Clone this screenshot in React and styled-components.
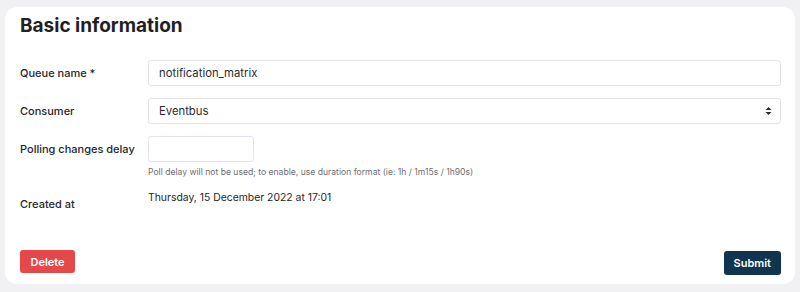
import styled, { createGlobalStyle } from "styled-components";

const GlobalStyle = createGlobalStyle`
  body {
    margin: 0;
    background: #f1f1f4;
    font-family: "Inter", "Noto Sans", sans-serif;
    color: #26262b;
  }
`;

const Page = styled.div`
  padding: 7px 5px 8px;
  height: 292px;
  box-sizing: border-box;
`;

const Card = styled.form`
  background: #fff;
  border-radius: 12px;
  height: 100%;
  box-sizing: border-box;
  padding: 9px 14px 9px 15px;
  display: flex;
  flex-direction: column;
`;

const Title = styled.h2`
  margin: 0;
  font-size: 19px;
  font-weight: 700;
  line-height: 20px;
  color: #1f1f24;
`;

const Fields = styled.div`
  margin-top: 24px;
  display: flex;
  flex-direction: column;
  gap: 12px;
`;

const Row = styled.div`
  display: grid;
  grid-template-columns: 128px 1fr;
  align-items: start;
`;

const Label = styled.label`
  font-size: 11px;
  font-weight: 500;
  line-height: 26px;
  padding-top: ${(p) => p.$offset || 0}px;
  color: #26262b;
`;

const Field = styled.div`
  position: relative;
  display: flex;
  flex-direction: column;
`;

const Input = styled.input`
  box-sizing: border-box;
  height: 26px;
  width: ${(p) => p.$width || "100%"};
  border: 1px solid #e3e5ee;
  border-radius: 3px;
  padding: 0 10px;
  font-family: inherit;
  font-size: 11.3px;
  color: #2a2a30;
  background: #fff;
  outline: none;
`;

const Select = styled.select`
  box-sizing: border-box;
  height: 26px;
  width: 100%;
  border: 1px solid #e3e5ee;
  border-radius: 3px;
  padding: 0 10px;
  font-family: inherit;
  font-size: 11.3px;
  color: #2a2a30;
  background: #fff;
  appearance: none;
  outline: none;
`;

const Caret = styled.svg`
  position: absolute;
  right: 9px;
  top: 8px;
  pointer-events: none;
`;

const Help = styled.div`
  margin-top: 4px;
  font-size: 8.6px;
  line-height: 12px;
  color: #6d6d74;
`;

const Value = styled.div`
  font-size: 10.4px;
  line-height: 16px;
  color: #26262b;
`;

const Footer = styled.div`
  margin-top: auto;
  display: flex;
  justify-content: space-between;
  align-items: flex-end;
`;

const Button = styled.button`
  border: none;
  border-radius: 3px;
  font-family: inherit;
  font-size: 11px;
  font-weight: 600;
  color: #fff;
  background: ${(p) => (p.$danger ? "#e5484a" : "#11344f")};
  height: ${(p) => (p.$danger ? 23 : 24)}px;
  padding: 0 ${(p) => (p.$danger ? 10.5 : 10)}px;
  margin-bottom: ${(p) => (p.$danger ? 2 : 0)}px;
  cursor: pointer;
`;

export default function App() {
  return (
    <Page>
      <GlobalStyle />
      <Card onSubmit={(e) => e.preventDefault()}>
        <Title>Basic information</Title>
        <Fields>
          <Row>
            <Label>Queue name *</Label>
            <Field>
              <Input defaultValue="notification_matrix" />
            </Field>
          </Row>
          <Row>
            <Label>Consumer</Label>
            <Field>
              <Select defaultValue="eventbus">
                <option value="eventbus">Eventbus</option>
              </Select>
              <Caret width="7" height="10" viewBox="0 0 7 10">
                <path d="M0.5 4 L3.5 1 L6.5 4 Z M0.5 6 L3.5 9 L6.5 6 Z" fill="#2a2a30" />
              </Caret>
            </Field>
          </Row>
          <Row>
            <Label>Polling changes delay</Label>
            <Field>
              <Input $width="106px" />
              <Help>
                Poll delay will not be used; to enable, use duration format (ie: 1h / 1m15s / 1h90s)
              </Help>
            </Field>
          </Row>
          <Row>
            <Label $offset={1}>Created at</Label>
            <Value>Thursday, 15 December 2022 at 17:01</Value>
          </Row>
        </Fields>
        <Footer>
          <Button type="button" $danger>
            Delete
          </Button>
          <Button type="submit">Submit</Button>
        </Footer>
      </Card>
    </Page>
  );
}
